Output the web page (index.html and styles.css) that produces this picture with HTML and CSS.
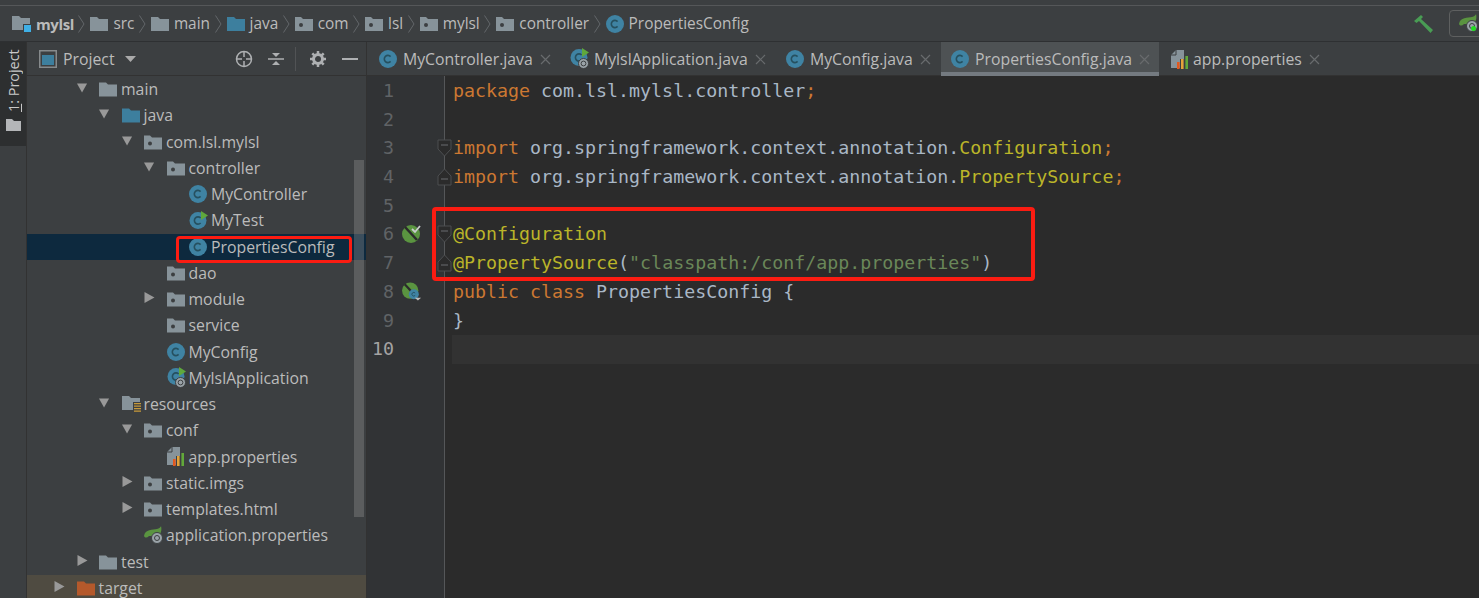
FILE: index.html
```html
<!DOCTYPE html>
<html lang="en">
<head>
<meta charset="utf-8">
<title>PropertiesConfig</title>
<link rel="stylesheet" href="styles.css">
</head>
<body>
<svg class="sprite" aria-hidden="true">
  <symbol id="folder" viewBox="0 0 18 15"><path d="M0 1h7l2 2h9v12H0z" fill="#87939a"/></symbol>
  <symbol id="bluefolder" viewBox="0 0 18 15"><path d="M0 1h7l2 2h9v12H0z" fill="#3d7f9e"/></symbol>
  <symbol id="orangefolder" viewBox="0 0 18 15"><path d="M0 1h7l2 2h9v12H0z" fill="#b5592b"/></symbol>
  <symbol id="pkg" viewBox="0 0 18 15"><path d="M0 1h6l2 2h10v12H0z" fill="#87939a"/><circle cx="6" cy="9" r="2" fill="#3c3f41"/></symbol>
  <symbol id="module" viewBox="0 0 20 18"><path d="M0 1h7l2 2h9v6h-7v6H0z" fill="#87939a"/><rect x="12" y="10" width="7" height="7" fill="#3fb0e6"/></symbol>
  <symbol id="res" viewBox="0 0 20 18"><path d="M0 1h7l2 2h9v4h-7v8H0z" fill="#87939a"/><path d="M12 8h7v1.3h-7zM12 10.5h7v1.3h-7zM12 13h7v1.3h-7zM12 15.5h7v1.3h-7z" fill="#c79a3a"/></symbol>
  <symbol id="cls" viewBox="0 0 18 18"><circle cx="9" cy="9" r="9" fill="#3f83a3"/><path d="M11.6 6.6A3.6 3.6 0 1 0 11.6 11.4" fill="none" stroke="#26505f" stroke-width="1.6"/></symbol>
  <symbol id="clsrun" viewBox="0 0 20 18"><circle cx="9" cy="9.5" r="8.5" fill="#3f83a3"/><path d="M11.6 7A3.6 3.6 0 1 0 11.6 12" fill="none" stroke="#26505f" stroke-width="1.6"/><path d="M12 0l7 4.5-7 4.5z" fill="#5fa83c"/></symbol>
  <symbol id="clsboot" viewBox="0 0 22 22"><circle cx="9" cy="9.5" r="8.5" fill="#3f83a3"/><path d="M11.6 7A3.6 3.6 0 1 0 11.6 12" fill="none" stroke="#26505f" stroke-width="1.6"/><path d="M12 0l7 4.5-7 4.5z" fill="#5fa83c"/><circle cx="13.5" cy="15.5" r="5" fill="#9aa3a8" stroke="#3c3f41"/><circle cx="13.5" cy="15.5" r="2.4" fill="none" stroke="#3c3f41"/></symbol>
  <symbol id="props" viewBox="0 0 18 19"><path d="M0 5l5-5h8v9h-4v9H0z" fill="#87939a"/><path d="M5 0v5H0" fill="none" stroke="#3c3f41"/><rect x="6" y="12" width="2.6" height="7" fill="#e2591f"/><rect x="10" y="9" width="2.6" height="10" fill="#e6a33a"/><rect x="14.4" y="6" width="2.6" height="13" fill="#62a83a"/></symbol>
  <symbol id="spring" viewBox="0 0 20 18"><path d="M0 10C1 3 9 4 13 3c2-.5 4-2 4-3 1 4 0 8-3 10H5C3 12 1 12 0 10z" fill="#5a9440"/><circle cx="13" cy="12" r="5.5" fill="#9aa3a8" stroke="#3c3f41"/><circle cx="13" cy="12" r="2.5" fill="none" stroke="#3c3f41"/></symbol>
  <symbol id="down" viewBox="0 0 12 10"><path d="M0 0h11L5.500 10z" fill="#999"/></symbol>
  <symbol id="right" viewBox="0 0 10 12"><path d="M0 0l10 5.500L0 11z" fill="#999"/></symbol>
  <symbol id="chev" viewBox="0 0 7 18"><path d="M.5.500L6 9 .5 17.500" fill="none" stroke="#63676a"/></symbol>
  <symbol id="x" viewBox="0 0 11 11"><path d="M1 1l9 9M10 1l-9 9" stroke="#686b6d" stroke-width="1.2"/></symbol>
  <symbol id="foldopen" viewBox="0 0 15 18"><path d="M1 1h13v9l-6.500 7L1 10z" fill="#2b2b2b" stroke="#4d4f51"/><path d="M4 6h7" stroke="#6a6d70"/></symbol>
  <symbol id="foldclose" viewBox="0 0 15 18"><path d="M1 17h13V8L7.500 1 1 8z" fill="#2b2b2b" stroke="#4d4f51"/><path d="M4 11h7" stroke="#6a6d70"/></symbol>
  <symbol id="bean1" viewBox="0 0 20 19"><circle cx="9" cy="10" r="9" fill="#5a9440"/><path d="M3 3l12 13" stroke="#2b2b2b" stroke-width="2.500"/><path d="M10 5l3 3 5-6" fill="none" stroke="#c9ccce" stroke-width="1.800"/></symbol>
  <symbol id="bean2" viewBox="0 0 22 20"><circle cx="9" cy="9" r="9" fill="#5a9440"/><path d="M3 2l12 13" stroke="#2b2b2b" stroke-width="2.500"/><circle cx="13" cy="13" r="5.500" fill="#3f83a3"/><path d="M14.500 11.800A2 2 0 1 0 14.500 14.200" fill="none" stroke="#26505f"/><path d="M14 17h7l-3.500 3z" fill="#bbb"/></symbol>
</svg>

<div class="topline"></div>
<nav class="crumbs">
  <svg class="ic20"><use href="#module"/></svg><b class="c-main">mylsl</b><svg class="chev"><use href="#chev"/></svg>
  <svg class="ic18"><use href="#folder"/></svg><span>src</span><svg class="chev"><use href="#chev"/></svg>
  <svg class="ic18"><use href="#folder"/></svg><span>main</span><svg class="chev"><use href="#chev"/></svg>
  <svg class="ic18"><use href="#bluefolder"/></svg><span>java</span><svg class="chev"><use href="#chev"/></svg>
  <svg class="ic18"><use href="#pkg"/></svg><span>com</span><svg class="chev"><use href="#chev"/></svg>
  <svg class="ic18"><use href="#pkg"/></svg><span>lsl</span><svg class="chev"><use href="#chev"/></svg>
  <svg class="ic18"><use href="#pkg"/></svg><span>mylsl</span><svg class="chev"><use href="#chev"/></svg>
  <svg class="ic18"><use href="#pkg"/></svg><span>controller</span><svg class="chev"><use href="#chev"/></svg>
  <svg class="ic18 cicon"><use href="#cls"/></svg><span>PropertiesConfig</span>
  <div class="tools">
    <svg class="hammer" viewBox="0 0 20 18"><path d="M0 6L7 0l2 2-2 2 12 11-2.500 3L5 6 2.500 8z" fill="#499c54"/></svg>
    <div class="runbox"><svg class="runicon"><use href="#spring"/></svg><i class="dot"></i></div>
  </div>
</nav>

<main class="body">
  <aside class="stripe">
    <div class="stripe-btn">
      <span class="vtext"><u>1</u>: Project</span>
      <svg class="stripe-folder" viewBox="0 0 15 12"><path d="M0 0h6l2 2h7v10H0z" fill="#b4b6b8"/></svg>
    </div>
  </aside>

  <section class="panel">
    <header class="panel-head">
      <svg class="win" viewBox="0 0 18 18"><rect x=".75" y=".75" width="16.500" height="16.500" fill="none" stroke="#868a8c" stroke-width="1.500"/><rect x="3" y="5" width="12" height="10" fill="#3d7f9e"/></svg>
      <span class="p-title">Project</span>
      <svg class="p-caret" viewBox="0 0 11 6"><path d="M0 0h11L5.500 6z" fill="#aaa"/></svg>
      <svg class="t-target" viewBox="0 0 18 18"><circle cx="9" cy="9" r="7.500" fill="none" stroke="#aeb0b2" stroke-width="1.500"/><path d="M9 1v6M9 11v6M1 9h6M11 9h6" stroke="#aeb0b2" stroke-width="1.500"/></svg>
      <svg class="t-coll" viewBox="0 0 16 16"><path d="M0 8h16" stroke="#aeb0b2" stroke-width="1.500"/><path d="M4 2h8L8 6zM4 14h8L8 10z" fill="#aeb0b2"/></svg>
      <i class="t-sep"></i>
      <svg class="t-gear" viewBox="0 0 16 16"><circle cx="8" cy="8" r="4.500" fill="none" stroke="#aeb0b2" stroke-width="3"/><path d="M8 0v3M8 13v3M0 8h3M13 8h3M2.300 2.300l2 2M11.700 11.700l2 2M13.700 2.300l-2 2M4.300 11.700l-2 2" stroke="#aeb0b2" stroke-width="2.500"/></svg>
      <i class="t-min"></i>
    </header>
    <div class="tree">
      <div class="row lv1"><svg class="arrow"><use href="#down"/></svg><svg class="ic"><use href="#folder"/></svg><span>main</span></div>
      <div class="row lv2"><svg class="arrow"><use href="#down"/></svg><svg class="ic"><use href="#bluefolder"/></svg><span>java</span></div>
      <div class="row lv3"><svg class="arrow"><use href="#down"/></svg><svg class="ic"><use href="#pkg"/></svg><span>com.lsl.mylsl</span></div>
      <div class="row lv4"><svg class="arrow"><use href="#down"/></svg><svg class="ic"><use href="#pkg"/></svg><span>controller</span></div>
      <div class="row lv5"><i class="noarrow"></i><svg class="ic"><use href="#cls"/></svg><span>MyController</span></div>
      <div class="row lv5"><i class="noarrow"></i><svg class="ic ic-w"><use href="#clsrun"/></svg><span>MyTest</span></div>
      <div class="row lv5 selected"><i class="noarrow"></i><svg class="ic"><use href="#cls"/></svg><span>PropertiesConfig</span><i class="mark mark-tree"></i></div>
      <div class="row lv4"><i class="noarrow"></i><svg class="ic"><use href="#pkg"/></svg><span>dao</span></div>
      <div class="row lv4"><svg class="arrow"><use href="#right"/></svg><svg class="ic"><use href="#pkg"/></svg><span>module</span></div>
      <div class="row lv4"><i class="noarrow"></i><svg class="ic"><use href="#pkg"/></svg><span>service</span></div>
      <div class="row lv4"><i class="noarrow"></i><svg class="ic"><use href="#cls"/></svg><span>MyConfig</span></div>
      <div class="row lv4"><i class="noarrow"></i><svg class="ic ic-b"><use href="#clsboot"/></svg><span>MylslApplication</span></div>
      <div class="row lv2"><svg class="arrow"><use href="#down"/></svg><svg class="ic ic-w"><use href="#res"/></svg><span>resources</span></div>
      <div class="row lv3"><svg class="arrow"><use href="#down"/></svg><svg class="ic"><use href="#pkg"/></svg><span>conf</span></div>
      <div class="row lv4"><i class="noarrow"></i><svg class="ic ic-p"><use href="#props"/></svg><span>app.properties</span></div>
      <div class="row lv3"><svg class="arrow"><use href="#right"/></svg><svg class="ic"><use href="#pkg"/></svg><span>static.imgs</span></div>
      <div class="row lv3"><svg class="arrow"><use href="#right"/></svg><svg class="ic"><use href="#pkg"/></svg><span>templates.html</span></div>
      <div class="row lv3"><i class="noarrow"></i><svg class="ic ic-w"><use href="#spring"/></svg><span>application.properties</span></div>
      <div class="row lv1"><svg class="arrow"><use href="#right"/></svg><svg class="ic"><use href="#folder"/></svg><span>test</span></div>
      <div class="row lv0 excluded"><svg class="arrow"><use href="#right"/></svg><svg class="ic"><use href="#orangefolder"/></svg><span>target</span></div>
      <i class="scrollbar"></i>
    </div>
  </section>

  <section class="editor">
    <div class="tabs">
      <div class="tab t1"><svg class="ic"><use href="#cls"/></svg><span>MyController.java</span><svg class="close"><use href="#x"/></svg></div>
      <div class="tab t2"><svg class="ic ic-b"><use href="#clsboot"/></svg><span>MylslApplication.java</span><svg class="close"><use href="#x"/></svg></div>
      <div class="tab t3"><svg class="ic"><use href="#cls"/></svg><span>MyConfig.java</span><svg class="close"><use href="#x"/></svg></div>
      <div class="tab t4 active"><svg class="ic"><use href="#cls"/></svg><span>PropertiesConfig.java</span><svg class="close"><use href="#x"/></svg></div>
      <div class="tab t5"><svg class="ic ic-p"><use href="#props"/></svg><span>app.properties</span><svg class="close"><use href="#x"/></svg></div>
    </div>
    <div class="code">
      <div class="ln"><span class="num">1</span><span class="mk"></span><span class="src"><span class="kw">package</span> com.lsl.mylsl.controller<span class="kw">;</span></span></div>
      <div class="ln"><span class="num">2</span><span class="mk"></span><span class="src"></span></div>
      <div class="ln"><span class="num">3</span><span class="mk"></span><svg class="fold"><use href="#foldopen"/></svg><span class="src"><span class="kw">import</span> org.springframework.context.annotation.<span class="an">Configuration</span><span class="kw">;</span></span></div>
      <div class="ln"><span class="num">4</span><span class="mk"></span><svg class="fold"><use href="#foldclose"/></svg><span class="src"><span class="kw">import</span> org.springframework.context.annotation.<span class="an">PropertySource</span><span class="kw">;</span></span></div>
      <div class="ln"><span class="num">5</span><span class="mk"></span><span class="src"></span></div>
      <div class="ln"><span class="num">6</span><span class="mk"><svg class="bean"><use href="#bean1"/></svg></span><svg class="fold"><use href="#foldopen"/></svg><span class="src"><span class="an">@Configuration</span></span></div>
      <div class="ln"><span class="num">7</span><span class="mk"></span><svg class="fold"><use href="#foldclose"/></svg><span class="src"><span class="an">@PropertySource</span>(<span class="str">"classpath:/conf/app.properties"</span>)</span></div>
      <div class="ln"><span class="num">8</span><span class="mk"><svg class="bean"><use href="#bean2"/></svg></span><span class="src"><span class="kw">public class</span> PropertiesConfig {</span></div>
      <div class="ln"><span class="num">9</span><span class="mk"></span><span class="src">}</span></div>
      <div class="ln caret"><span class="num cur">10</span><span class="mk"></span><span class="src"></span></div>
      <i class="gutter-line"></i>
      <i class="mark mark-code"></i>
    </div>
  </section>
</main>
</body>
</html>
```
FILE: styles.css
```css
* { box-sizing: border-box; }
html, body { margin: 0; height: 598px; overflow: hidden; }
body {
  background: #3c3f41;
  color: #bbbbbb;
  font-family: "Open Sans", "Noto Sans", sans-serif;
  font-size: 15.8px;
  display: flex;
  flex-direction: column;
}
svg { display: block; flex: none; }
.sprite { width: 0; height: 0; position: absolute; }

.topline { height: 6px; border-bottom: 1px solid #555759; flex: none; }

.crumbs {
  height: 36px;
  flex: none;
  display: flex;
  align-items: center;
  padding-left: 12px;
  border-bottom: 1px solid #2e3032;
  white-space: nowrap;
}
.crumbs span { margin-left: 5px; font-size: 15.4px; }
.crumbs b { margin-left: 4px; font-weight: 700; font-size: 15px; letter-spacing: -.4px; }
.ic20 { width: 20px; height: 18px; }
.ic18 { width: 18px; height: 15px; }
.cicon { height: 18px; }
.chev { width: 7px; height: 18px; margin: 0 5px 0 4.5px; }
.tools { margin-left: auto; display: flex; align-items: center; }
.hammer { width: 20px; height: 18px; margin-right: 15px; }
.runbox {
  width: 40px;
  height: 27px;
  border: 1px solid #5e6060;
  border-radius: 4px;
  margin-right: -10px;
  padding: 3px 0 0 9px;
  position: relative;
}
.runicon { width: 20px; height: 18px; }
.dot { position: absolute; left: 21px; top: 15px; width: 5px; height: 5px; border-radius: 50%; background: #22dd22; }

.body { flex: 1; display: flex; min-height: 0; }

.stripe { width: 27px; flex: none; border-right: 1px solid #323232; }
.stripe-btn {
  height: 104px;
  background: #2d2f30;
  display: flex;
  flex-direction: column;
  align-items: center;
  padding-top: 9px;
  gap: 7px;
  color: #c8c8c8;
}
.vtext {
  writing-mode: vertical-rl;
  transform: rotate(180deg);
  font-size: 14.4px;
  line-height: 15px;
  height: 61px;
  text-align: left;
  white-space: nowrap;
}
.stripe-folder { width: 15px; height: 12px; }

.panel { width: 340px; flex: none; display: flex; flex-direction: column; border-right: 1px solid #323232; }
.panel-head {
  height: 34px;
  flex: none;
  display: flex;
  align-items: center;
  padding-left: 12px;
  border-bottom: 1px solid #323232;
}
.win { width: 18px; height: 18px; }
.p-title { margin-left: 6px; width: 52px; }
.p-caret { width: 11px; height: 6px; margin-left: 10px; }
.t-target { width: 18px; height: 18px; margin-left: 99px; }
.t-coll { width: 16px; height: 16px; margin-left: 15px; }
.t-sep { width: 1px; height: 24px; background: #515355; margin-left: 11px; }
.t-gear { width: 16px; height: 16px; margin-left: 14px; }
.t-min { width: 16px; height: 2px; background: #aeb0b2; margin-left: 16px; }

.tree { flex: 1; position: relative; overflow: hidden; white-space: nowrap; }
.row { height: 26.25px; display: flex; align-items: center; }
.row span { margin-left: 4px; }
.lv0 { padding-left: 27px; }
.lv1 { padding-left: 49.5px; }
.lv2 { padding-left: 72px; }
.lv3 { padding-left: 94.5px; }
.lv4 { padding-left: 117px; }
.lv5 { padding-left: 139.5px; }
.arrow { width: 11px; height: 12px; margin-right: 11.5px; margin-top: -2px; }
.noarrow { width: 22.5px; flex: none; }
.ic { width: 18px; height: 18px; }
.ic-w { width: 20px; height: 18px; margin-right: -2px; }
.ic-b { width: 22px; height: 22px; margin-right: -4px; }
.ic-p { width: 18px; height: 19px; }
.selected { background: #0d293e; }
.excluded { background: #4f4b41; }
.scrollbar { position: absolute; left: 327px; top: 84px; width: 10px; height: 357px; background: rgba(150,150,150,.35); }

.mark { position: absolute; border: 3px solid #fb1c12; border-radius: 4px; display: block; }
.mark-tree { left: 149px; top: 160px; width: 176px; height: 27px; }
.mark-code { left: 65px; top: 131px; width: 603px; height: 74px; border-width: 4px; }

.editor { flex: 1; min-width: 0; display: flex; flex-direction: column; }
.tabs { height: 34px; flex: none; display: flex; border-bottom: 1px solid #323232; white-space: nowrap; }
.tab { height: 34px; display: flex; align-items: center; padding-left: 12px; }
.tab span { margin-left: 6px; }
.close { width: 11px; height: 11px; margin-left: 7px; }
.t1 { width: 191px; }
.t2 { width: 216px; }
.t3 { width: 167px; }
.t4 { width: 218px; padding-left: 10px; }
.t5 { padding-left: 12px; }
.t5 span { margin-left: 4px; }
.active { background: #4e5254; box-shadow: inset 0 -4px 0 #747a80; }

.code {
  flex: 1;
  position: relative;
  padding-top: 1px;
  background: linear-gradient(to right, #313335 77px, #2b2b2b 77px);
  font-family: "DejaVu Sans Mono", monospace;
  font-size: 18.3px;
  color: #a9b7c6;
}
.ln { height: 28.7px; line-height: 28.7px; display: flex; position: relative; white-space: pre; }
.num { width: 27px; text-align: right; color: #606366; flex: none; }
.cur { color: #a4a3a3; }
.mk { width: 59px; flex: none; padding: 4px 0 0 8px; }
.bean { width: 20px; height: 19px; overflow: visible; }
.src { flex: 1; }
.caret .src { background: #323232; margin-left: -1px; }
.fold { position: absolute; left: 70px; top: 5px; width: 15px; height: 18px; z-index: 1; }
.kw { color: #cc7832; }
.an { color: #bbb529; }
.str { color: #6a8759; }
.gutter-line { position: absolute; left: 77px; top: 0; bottom: 0; width: 1px; background: #555759; }
```
